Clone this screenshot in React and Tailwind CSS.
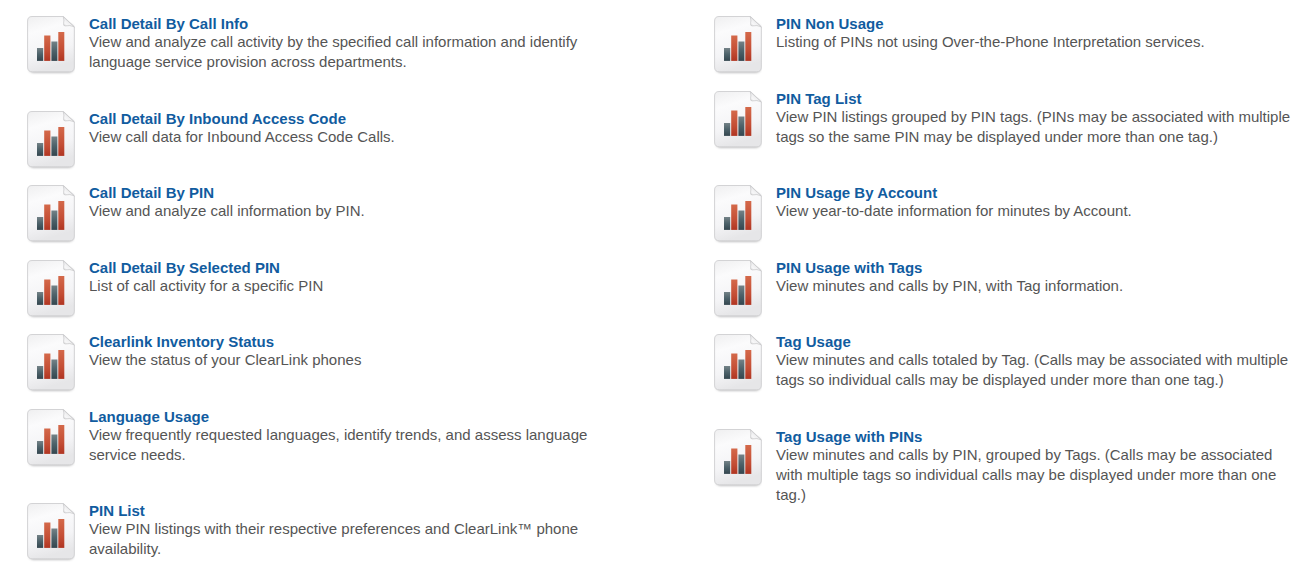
const leftReports = [
  ["Call Detail By Call Info", "View and analyze call activity by the specified call information and identify language service provision across departments."],
  ["Call Detail By Inbound Access Code", "View call data for Inbound Access Code Calls."],
  ["Call Detail By PIN", "View and analyze call information by PIN."],
  ["Call Detail By Selected PIN", "List of call activity for a specific PIN"],
  ["Clearlink Inventory Status", "View the status of your ClearLink phones"],
  ["Language Usage", "View frequently requested languages, identify trends, and assess language service needs."],
  ["PIN List", "View PIN listings with their respective preferences and ClearLink™ phone availability."],
];

const rightReports = [
  ["PIN Non Usage", "Listing of PINs not using Over-the-Phone Interpretation services."],
  ["PIN Tag List", "View PIN listings grouped by PIN tags. (PINs may be associated with multiple tags so the same PIN may be displayed under more than one tag.)"],
  ["PIN Usage By Account", "View year-to-date information for minutes by Account."],
  ["PIN Usage with Tags", "View minutes and calls by PIN, with Tag information."],
  ["Tag Usage", "View minutes and calls totaled by Tag. (Calls may be associated with multiple tags so individual calls may be displayed under more than one tag.)"],
  ["Tag Usage with PINs", "View minutes and calls by PIN, grouped by Tags. (Calls may be associated with multiple tags so individual calls may be displayed under more than one tag.)"],
];

function IconGradients() {
  return (
    <svg className="absolute size-0" aria-hidden="true">
      <defs>
        <linearGradient id="page" x1="0" y1="0" x2="0.25" y2="1">
          <stop offset="0" stopColor="#efeff0" />
          <stop offset="0.3" stopColor="#fbfbfc" />
          <stop offset="0.7" stopColor="#f4f4f6" />
          <stop offset="1" stopColor="#e6e6e8" />
        </linearGradient>
        <linearGradient id="edge" x1="0" y1="0" x2="0" y2="1">
          <stop offset="0" stopColor="#d3d3d5" />
          <stop offset="1" stopColor="#d3d3d5" />
        </linearGradient>
        <linearGradient id="flap" x1="0" y1="1" x2="1" y2="0">
          <stop offset="0" stopColor="#c9c9cb" />
          <stop offset="0.25" stopColor="#f7f7f8" />
          <stop offset="1" stopColor="#dcdcde" />
        </linearGradient>
        <linearGradient id="red" x1="0" y1="0" x2="0" y2="1">
          <stop offset="0" stopColor="#d4694a" />
          <stop offset="0.6" stopColor="#c44e35" />
          <stop offset="1" stopColor="#b03522" />
        </linearGradient>
        <linearGradient id="slate" x1="0" y1="0" x2="0" y2="1">
          <stop offset="0" stopColor="#748287" />
          <stop offset="0.5" stopColor="#4c6169" />
          <stop offset="1" stopColor="#34464f" />
        </linearGradient>
        <filter id="soft" x="-10%" y="-10%" width="120%" height="120%">
          <feGaussianBlur stdDeviation="0.9" />
        </filter>
        <filter id="smooth" filterUnits="userSpaceOnUse" x="0" y="0" width="48" height="60" colorInterpolationFilters="sRGB">
          <feGaussianBlur stdDeviation="0.6" />
        </filter>
      </defs>
    </svg>
  );
}

function ReportIcon() {
  return (
    <svg viewBox="0 0 48 60" className="h-[60px] w-12 shrink-0" aria-hidden="true">
      <rect x="1.5" y="8" width="45.5" height="49" rx="5" fill="#a8a8aa" opacity="0.7" filter="url(#soft)" />
      <path
        d="M5 .5H36.5L47.3 10.8V51Q47.3 55.8 42.5 55.8H5.4Q.6 55.8 .6 51V5Q.6 .5 5 .5Z"
        fill="url(#page)"
        stroke="url(#edge)"
        strokeWidth="1"
      />
      <path d="M36.3 .8L47.2 10.8Q43 8.8 38.4 9.9Q36.2 10 36.6 7.6Q37.4 4 36.3 .8Z" fill="url(#flap)" stroke="#c4c4c6" strokeWidth="0.7" />
      <g filter="url(#smooth)">
        <rect x="10" y="32" width="6.2" height="12.9" fill="url(#slate)" />
        <rect x="17.2" y="19.5" width="6.2" height="25.4" fill="url(#red)" />
        <rect x="24.4" y="25.5" width="6" height="19.4" fill="url(#slate)" />
        <rect x="31.3" y="16" width="6" height="28.9" fill="url(#red)" />
      </g>
    </svg>
  );
}

function ReportList({ reports }) {
  return (
    <ul>
      {reports.map(([title, description]) => (
        <li key={title} className="flex items-start gap-3.5 odd:pb-[38px] even:pb-[37px]">
          <div className="-mb-6 mt-px shrink-0">
            <ReportIcon />
          </div>
          <div className="min-w-0 flex-1">
            <h2 className="text-[15px] leading-[17px] font-bold text-[#115c9f]">
              <a href="#" className="hover:underline">{title}</a>
            </h2>
            <p className="text-[15px] leading-5 text-[#555555]">{description}</p>
          </div>
        </li>
      ))}
    </ul>
  );
}

export default function App() {
  return (
    <main className="bg-white pt-[15px] pr-5 pl-[27px] font-['Liberation_Sans',Arial,sans-serif]">
      <IconGradients />
      <div className="grid grid-cols-2 gap-x-[105px]">
        <ReportList reports={leftReports} />
        <ReportList reports={rightReports} />
      </div>
    </main>
  );
}
